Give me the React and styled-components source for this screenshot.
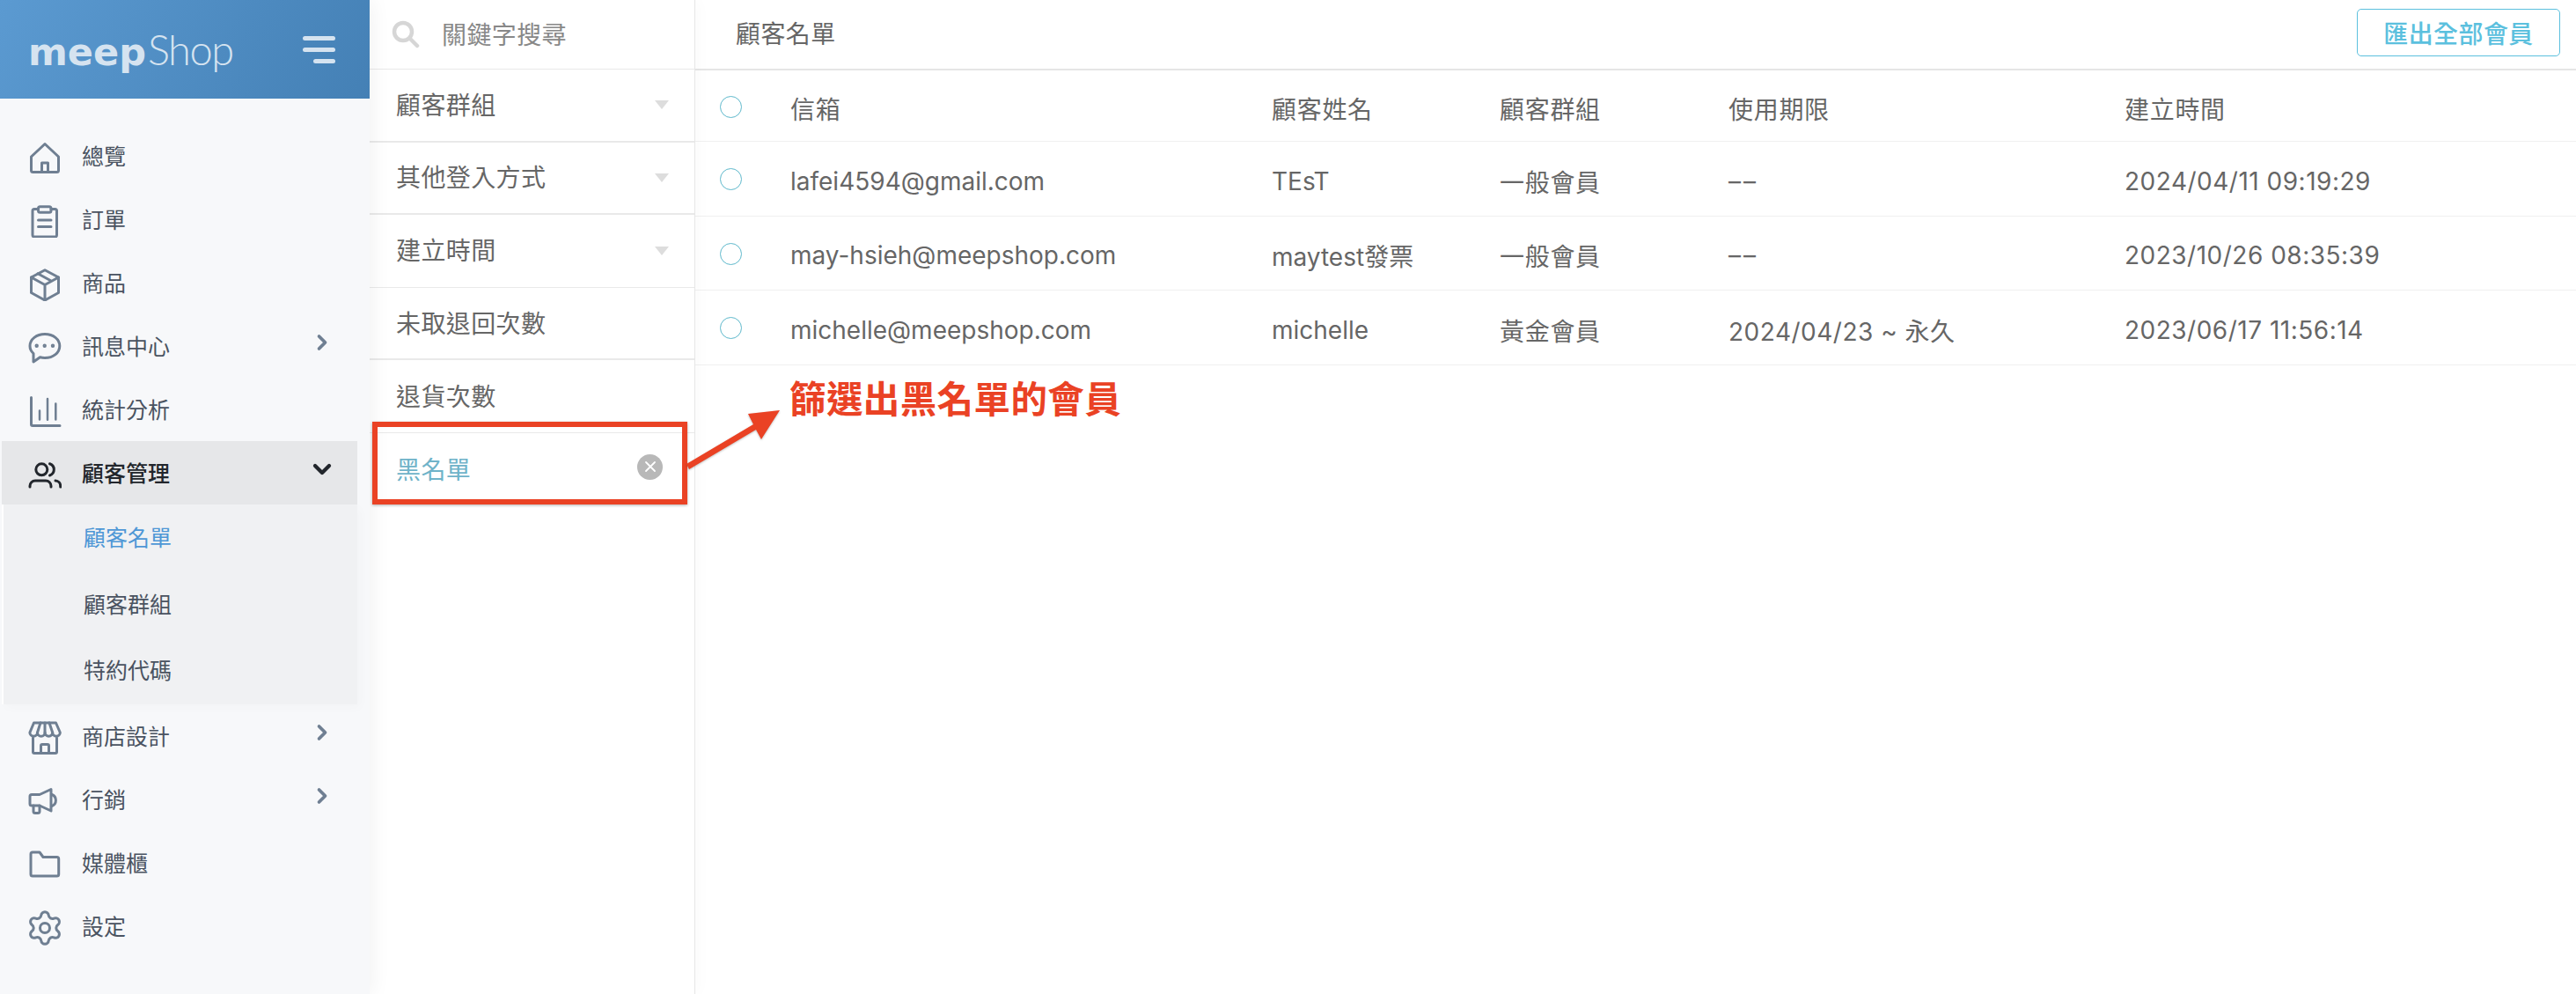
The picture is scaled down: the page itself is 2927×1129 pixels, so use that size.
import styled, { createGlobalStyle } from 'styled-components';
import { ChevronDown, ChevronRight, Settings } from 'lucide-react';

const GlobalStyle = createGlobalStyle`
  html, body {
    margin: 0;
    padding: 0;
    background: #fff;
  }
  * {
    box-sizing: border-box;
  }
`;

const FONT = `Inter, "Noto Sans CJK TC", sans-serif`;

const Glyph = ({ children }) => (
  <svg width="38" height="38" viewBox="0 0 38 38" fill="none" stroke="currentColor" strokeWidth="3" strokeLinecap="round" strokeLinejoin="round">
    {children}
  </svg>
);

const HomeIcon = () => (
  <Glyph>
    <path d="M19 3.5L3.5 18v15.5a2 2 0 0 0 2 2h27a2 2 0 0 0 2-2V18z" />
    <path d="M15.5 35V25h7v10" />
  </Glyph>
);

const ClipboardIcon = () => (
  <Glyph>
    <path d="M11 5.5H7a2 2 0 0 0-2 2V35a2 2 0 0 0 2 2h23.5a2 2 0 0 0 2-2V7.5a2 2 0 0 0-2-2H26" />
    <rect x="11.5" y="2.8" width="14.5" height="6.4" rx="2" />
    <path d="M11.5 18H26M11.5 25.5H26" />
  </Glyph>
);

const BoxIcon = () => (
  <Glyph>
    <path d="M19 2.7l15.5 8.3v17.5L19 37 3.5 28.5V11z" />
    <path d="M3.5 11L19 19.5 34.5 11M19 19.5V37M11 6.8l15.5 8.5" />
  </Glyph>
);

const ChatIcon = () => (
  <Glyph>
    <path d="M19 3.5c9.5 0 16.8 5.8 16.8 13.5S28.5 30.5 19 30.5c-2 0-3.8-.2-5.5-.8L6 35v-9.5C3.3 23 2 20.2 2 17 2 9.3 9.5 3.5 19 3.5z" />
    <circle cx="9.7" cy="16.7" r="1" strokeWidth="2.4" />
    <circle cx="18.7" cy="16.7" r="1" strokeWidth="2.4" />
    <circle cx="28" cy="16.7" r="1" strokeWidth="2.4" />
  </Glyph>
);

const ChartIcon = () => (
  <Glyph>
    <path d="M3.5 3.5V34a1.5 1.5 0 0 0 1.5 1.5h31" />
    <path d="M13 18.5v10M22 5v23.7M31.3 10.5v18" strokeWidth="2.5" />
  </Glyph>
);

const UsersIcon = () => (
  <Glyph>
    <circle cx="15.3" cy="13.3" r="6.5" />
    <path d="M24.5 6.7a7 7 0 0 1 0 13.3" />
    <path d="M2 33v-1a6 6 0 0 1 6-6h12a6 6 0 0 1 6 6v1" />
    <path d="M31 26a6 6 0 0 1 5.7 6v1" />
  </Glyph>
);

const StoreIcon = () => (
  <Glyph>
    <path d="M6.5 2h25L36.3 13a4.3 4.3 0 0 1-8.6 0 4.3 4.3 0 0 1-8.6 0 4.3 4.3 0 0 1-8.6 0 4.3 4.3 0 0 1-8.6 0z" />
    <path d="M14 2l-3.5 11M19 2v11M24 2l3.7 11" />
    <path d="M5.5 19v16a1.5 1.5 0 0 0 1.5 1.5h24a1.5 1.5 0 0 0 1.5-1.5V19" />
    <path d="M14.5 36v-8a1.5 1.5 0 0 1 1.5-1.5h6a1.5 1.5 0 0 1 1.5 1.5v8" />
  </Glyph>
);

const MegaphoneIcon = () => (
  <Glyph>
    <path d="M26 5.5l-13 6H4a2 2 0 0 0-2 2V22a2 2 0 0 0 2 2h9l13 6z" />
    <path d="M27 11.5a7 7 0 0 1 0 13" />
    <path d="M6 24v6.5a2 2 0 0 0 2 2h3a2 2 0 0 0 2-2V24" />
  </Glyph>
);

const FolderIcon = () => (
  <Glyph>
    <path d="M3 7a2 2 0 0 1 2-2h8l4 5.5h15.7a2 2 0 0 1 2 2V30a2 2 0 0 1-2 2H5a2 2 0 0 1-2-2z" />
  </Glyph>
);

const GearIcon = () => <GearGlyph size={44} strokeWidth={1.65} />;

const topItems = [
  { label: '總覽', Icon: HomeIcon },
  { label: '訂單', Icon: ClipboardIcon },
  { label: '商品', Icon: BoxIcon },
  { label: '訊息中心', Icon: ChatIcon, arrow: true },
  { label: '統計分析', Icon: ChartIcon },
];

const bottomItems = [
  { label: '商店設計', Icon: StoreIcon, arrow: true },
  { label: '行銷', Icon: MegaphoneIcon, arrow: true },
  { label: '媒體櫃', Icon: FolderIcon },
  { label: '設定', Icon: GearIcon },
];

const filters = [
  { label: '顧客群組', caret: true, thick: true },
  { label: '其他登入方式', caret: true, thick: true },
  { label: '建立時間', caret: true },
  { label: '未取退回次數', thick: true },
  { label: '退貨次數' },
];

const columns = ['信箱', '顧客姓名', '顧客群組', '使用期限', '建立時間'];

const customers = [
  ['lafei4594@gmail.com', 'TEsT', '一般會員', '––', '2024/04/11 09:19:29'],
  ['may-hsieh@meepshop.com', 'maytest發票', '一般會員', '––', '2023/10/26 08:35:39'],
  ['michelle@meepshop.com', 'michelle', '黃金會員', '2024/04/23 ~ 永久', '2023/06/17 11:56:14'],
];

const NavItem = ({ label, Icon, arrow }) => (
  <NavRow>
    <Icon />
    <NavLabel>{label}</NavLabel>
    {arrow && (
      <NavArrow>
        <ChevronRight size={28} strokeWidth={3.2} />
      </NavArrow>
    )}
  </NavRow>
);

const App = () => (
  <Page>
    <GlobalStyle />
    <Sidebar>
      <Brand>
        <Logo>
          <LogoBold>meep</LogoBold>Shop
        </Logo>
        <Burger>
          <BurgerLine />
          <BurgerLine />
          <BurgerLine $short />
        </Burger>
      </Brand>
      <Nav>
        {topItems.map((item) => (
          <NavItem key={item.label} {...item} />
        ))}
        <ActiveRow>
          <UsersIcon />
          <NavLabel>顧客管理</NavLabel>
          <NavArrow>
            <ChevronDown size={32} strokeWidth={3.2} />
          </NavArrow>
        </ActiveRow>
        <SubMenu>
          <SubItem $active>顧客名單</SubItem>
          <SubItem>顧客群組</SubItem>
          <SubItem>特約代碼</SubItem>
        </SubMenu>
        {bottomItems.map((item) => (
          <NavItem key={item.label} {...item} />
        ))}
      </Nav>
    </Sidebar>

    <FilterPanel>
      <SearchRow>
        <svg width="32" height="32" viewBox="0 0 32 32" fill="none" stroke="#d6d6d6" strokeWidth="4.5" strokeLinecap="round">
          <circle cx="13" cy="13" r="10" />
          <path d="M21 21l8 8" />
        </svg>
        <SearchText>關鍵字搜尋</SearchText>
      </SearchRow>
      {filters.map((f) => (
        <FilterRow key={f.label} $thick={f.thick}>
          <FilterLabel>{f.label}</FilterLabel>
          {f.caret && <Caret />}
        </FilterRow>
      ))}
      <FilterRow $active>
        <FilterLabel>黑名單</FilterLabel>
        <ClearButton>
          <svg width="14" height="14" viewBox="0 0 14 14" stroke="#fff" strokeWidth="1.8" strokeLinecap="round">
            <path d="M2 2l10 10M12 2L2 12" />
          </svg>
        </ClearButton>
      </FilterRow>
    </FilterPanel>

    <Main>
      <TopBar>
        <Title>顧客名單</Title>
        <ExportButton>匯出全部會員</ExportButton>
      </TopBar>
      <HeadRow>
        <RadioCell>
          <Radio />
        </RadioCell>
        {columns.map((c) => (
          <Cell key={c} $gap={0.7}>
            {c}
          </Cell>
        ))}
      </HeadRow>
      {customers.map((row) => (
        <BodyRow key={row[0]}>
          <RadioCell>
            <Radio />
          </RadioCell>
          <Cell>{row[0]}</Cell>
          <Cell>{row[1]}</Cell>
          <Cell $gap={0.7}>{row[2]}</Cell>
          <Cell $gap={row[3].length === 2 ? 3 : 0.5}>{row[3]}</Cell>
          <Cell $gap={0.5}>{row[4]}</Cell>
        </BodyRow>
      ))}
    </Main>

    <Highlight />
    <Arrow width="120" height="80" viewBox="0 0 120 80">
      <path d="M2 67L78 22l-6-12 36-4-21 33-6-11L5 73z" fill="#ea4224" />
    </Arrow>
    <Note>篩選出黑名單的會員</Note>
  </Page>
);

export default App;

const Page = styled.div`
  position: relative;
  display: flex;
  width: 2927px;
  height: 1129px;
  overflow: hidden;
  background: #fff;
  font-family: ${FONT};
`;

const Sidebar = styled.aside`
  position: relative;
  z-index: 3;
  flex: 0 0 420px;
  background: #f7f8fa;
  box-shadow: 0 0 24px rgba(0, 0, 0, 0.07);
`;

const Brand = styled.div`
  display: flex;
  align-items: center;
  justify-content: space-between;
  height: 112px;
  padding: 0 39px 0 32px;
  background: linear-gradient(120deg, #5b9ad1, #4480b5);
`;

const Logo = styled.div`
  font-family: Lato, sans-serif;
  font-size: 47px;
  font-weight: 300;
  letter-spacing: -1.5px;
  color: #d5e3f0;
`;

const LogoBold = styled.span`
  margin-right: 2px;
  font-family: "DejaVu Sans", sans-serif;
  font-size: 43px;
  font-weight: 700;
  letter-spacing: 0;
`;

const Burger = styled.div`
  display: flex;
  flex-direction: column;
  align-items: flex-end;
  gap: 8px;
`;

const BurgerLine = styled.span`
  display: block;
  width: ${(p) => (p.$short ? 25 : 37)}px;
  height: 5px;
  border-radius: 3px;
  background: #d5e3f0;
`;

const Nav = styled.nav`
  padding: 29px 14px 0 2px;
`;

const NavRow = styled.div`
  display: flex;
  align-items: center;
  gap: 23px;
  height: 72px;
  padding-left: 30px;
  color: #6f7f92;

  > svg {
    margin-top: 4px;
  }
`;

const GearGlyph = styled(Settings)`
  margin: 0 -3px;
`;

const NavLabel = styled.span`
  padding-bottom: 3px;
  font-size: 25px;
  color: #4a5361;
`;

const NavArrow = styled.span`
  display: flex;
  margin: -8px 26px 0 auto;
`;

const ActiveRow = styled(NavRow)`
  background: #e6e7e9;
  color: #22262c;

  ${NavLabel} {
    color: #22262c;
    font-weight: 500;
  }

  ${NavArrow} {
    margin-right: 24px;
  }
`;

const SubMenu = styled.div`
  height: 227px;
  border-left: 2px solid #fff;
  background: #f0f1f3;
  box-shadow: 4px 4px 12px rgba(0, 0, 0, 0.02);
`;

const SubItem = styled.div`
  display: flex;
  align-items: center;
  height: 75.6px;
  padding: 0 0 3px 91px;
  font-size: 25px;
  color: ${(p) => (p.$active ? '#4e97d6' : '#4a5361')};
`;

const FilterPanel = styled.section`
  position: relative;
  z-index: 2;
  flex: 0 0 370px;
  border-right: 1px solid #e6e6e6;
  background: #fff;
  box-shadow: 0 0 20px rgba(0, 0, 0, 0.03);
`;

const SearchRow = styled.div`
  display: flex;
  align-items: center;
  gap: 25px;
  height: 79px;
  padding: 0 25px;
  border-bottom: 1px solid #e9e9e9;
`;

const SearchText = styled.span`
  padding-bottom: 3px;
  font-size: 28px;
  letter-spacing: 0.4px;
  color: #888;
`;

const FilterRow = styled.div`
  display: flex;
  align-items: center;
  justify-content: space-between;
  height: 82.6px;
  padding: 0 36px 0 30px;
  border-bottom: ${(p) => (p.$thick ? '2px solid #e9e9e9' : p.$active ? 'none' : '1px solid #e9e9e9')};
  font-size: 28px;
  color: ${(p) => (p.$active ? '#6fb3c9' : '#666')};
`;

const FilterLabel = styled.span`
  padding-bottom: 3px;
  letter-spacing: 0.4px;
`;

const Caret = styled.span`
  width: 0;
  height: 0;
  margin-right: -7px;
  border-top: 10px solid #ddd;
  border-left: 8px solid transparent;
  border-right: 8px solid transparent;
`;

const ClearButton = styled.span`
  display: flex;
  align-items: center;
  justify-content: center;
  width: 29px;
  height: 29px;
  margin-top: -6px;
  border-radius: 50%;
  background: #b8b8b8;
`;

const Main = styled.main`
  flex: 1;
  background: #fff;
`;

const TopBar = styled.header`
  display: flex;
  align-items: center;
  justify-content: space-between;
  height: 80px;
  padding: 0 18px 4px 46px;
  border-bottom: 2px solid #e5e5e5;
`;

const Title = styled.h1`
  margin: 0;
  font-size: 28px;
  font-weight: 400;
  letter-spacing: 0.4px;
  color: #666;
`;

const ExportButton = styled.button`
  width: 231px;
  height: 54px;
  border: 1.5px solid #5bc0de;
  border-radius: 5px;
  background: #fff;
  font-family: ${FONT};
  font-size: 28px;
  font-weight: 500;
  letter-spacing: 0.4px;
  color: #5bc0de;
`;

const TableRow = styled.div`
  display: grid;
  grid-template-columns: 108px 547px 259px 260px 450px 1fr;
  align-items: center;
  height: 84.5px;
  padding-top: 6px;
  border-bottom: 1px solid #f0f0f0;
  font-size: 28px;
  color: #666;
`;

const HeadRow = styled(TableRow)`
  height: 81px;
`;

const BodyRow = styled(TableRow)``;

const RadioCell = styled.div`
  display: flex;
  padding: 0 0 4px 28px;
`;

const Radio = styled.span`
  display: block;
  width: 25px;
  height: 25px;
  border: 1px solid #5fb9cc;
  border-radius: 50%;
`;

const Cell = styled.div`
  white-space: nowrap;
  letter-spacing: ${(p) => p.$gap || 0}px;
`;

const Highlight = styled.div`
  position: absolute;
  z-index: 4;
  top: 479px;
  left: 423px;
  width: 358px;
  height: 94px;
  border: 6px solid #ea4224;
  box-shadow: 0 1px 3px rgba(0, 0, 0, 0.3);
`;

const Arrow = styled.svg`
  position: absolute;
  z-index: 4;
  top: 460px;
  left: 778px;
  filter: drop-shadow(0 1px 1px rgba(0, 0, 0, 0.25));
`;

const Note = styled.div`
  position: absolute;
  z-index: 4;
  top: 426px;
  left: 897px;
  font-size: 41.5px;
  font-weight: 700;
  line-height: 56px;
  letter-spacing: 0.4px;
  color: #ea4224;
`;
